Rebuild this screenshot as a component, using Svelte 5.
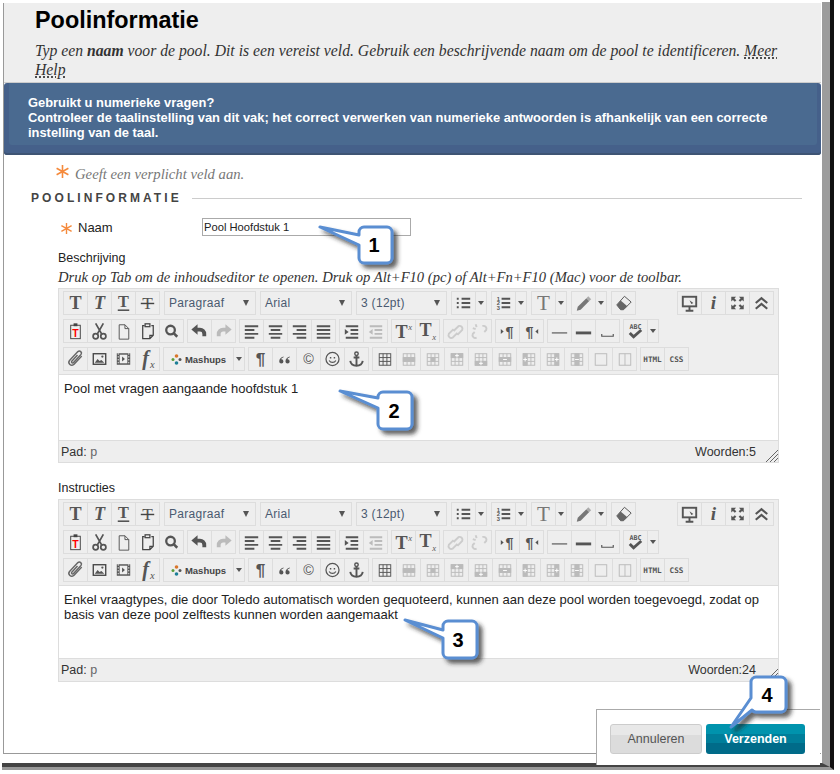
<script>
  const txt = (s, x, y, size, attrs = 'font-family="Liberation Serif" font-weight="bold"', c = '#555') =>
    `<text x="${x}" y="${y}" font-size="${size}" text-anchor="middle" fill="${c}" stroke="none" ${attrs}>${s}</text>`;
  const grid = (c, extra = '') =>
    `<g stroke="${c}"><rect x="6.5" y="6.5" width="12" height="12"/><path d="M10.5 6.5v12M14.5 6.5v12M6.5 10.5h12M6.5 14.5h12"/></g>${extra}`;
  const lines = (d, c = '#555') => `<path d="${d}" stroke="${c}" stroke-width="2"/>`;
  const sans = 'font-family="Liberation Sans" font-weight="bold"';
  const mono = 'font-family="DejaVu Sans Mono" font-weight="bold"';
  const ital = 'font-family="Liberation Serif" font-weight="bold" font-style="italic"';
  const G = '#bbb';

  const icons = {
    tb: txt('T', 12, 18, 19),
    ti: txt('T', 12, 18, 19, ital),
    tu: txt('T', 12, 16, 17) + '<path d="M6 19.5h12" stroke="#444" stroke-width="1.5"/>',
    ts: txt('T', 12, 18, 18, 'font-family="Liberation Serif"') + '<path d="M5 12.5h14" stroke="#444" stroke-width="1.5"/>',
    list: lines('M10 7.5h9M10 12h9M10 16.5h9M5 7.5h2M5 12h2M5 16.5h2'),
    num: lines('M10 7.5h9M10 12h9M10 16.5h9') + txt('1', 6.5, 9.5, 6, sans) + txt('2', 6.5, 14.5, 6, sans) + txt('3', 6.5, 19.5, 6, sans),
    tc: txt('T', 12, 19, 22, 'font-family="Liberation Serif"', '#777'),
    mark: '<path d="M5 20l1-4 9-9 3 3-9 9z" fill="#777" stroke="none"/><path d="M15 7l2-2 3 3-2 2z" fill="#aaa" stroke="none"/>',
    erase: '<path d="M5 14l8-9 7 6-8 8H9z" stroke="#555"/><path d="M5 14l4-4.5 7 6L12 19H9z" fill="#666" stroke="none"/>',
    mon: '<rect x="5" y="5.5" width="14" height="10" stroke="#555" stroke-width="2"/><path d="M12 16v3M8 20h8" stroke="#555" stroke-width="2"/><path d="M12 9l4 3-2 1z" fill="#555" stroke="none"/>',
    info: txt('i', 12, 18, 20, ital),
    full: '<path d="M5.500 5.500h5l-1.700 1.700 2 2-1.600 1.600-2-2-1.700 1.700zM18.500 5.500h-5l1.700 1.700-2 2 1.600 1.600 2-2 1.700 1.700zM5.500 18.500h5l-1.700-1.700 2-2-1.600-1.600-2 2-1.700-1.700zM18.500 18.500h-5l1.700-1.700-2-2 1.600-1.600 2 2 1.700-1.700z" fill="#555" stroke="none"/>',
    up: '<path d="M6 12l6-5 6 5M6 18l6-5 6 5" stroke="#555" stroke-width="2.2"/>',
    pasteT: '<rect x="7" y="6" width="10" height="14" stroke="#444"/><rect x="10" y="4" width="4" height="3" fill="#444" stroke="none"/>' + txt('T', 12, 18, 11, sans, '#f00'),
    cut: '<circle cx="8" cy="17.5" r="2.7" stroke="#555" stroke-width="1.8"/><circle cx="16" cy="17.5" r="2.7" stroke="#555" stroke-width="1.8"/><path d="M9.5 15.5L16 4M14.5 15.5L8 4" stroke="#555" stroke-width="1.8"/>',
    doc: '<path d="M7.500 5.500h6l4 4v11h-10zM13.500 5.500v4h4" stroke="#555"/>',
    paste: '<path d="M9 6.500H7v13.500h7.500l3.500-3.500V6.500h-2M14.500 20v-3.500H18" stroke="#444" stroke-width="1.300"/><rect x="9.500" y="4.500" width="5" height="3" stroke="#444" stroke-width="1.300"/>',
    find: '<circle cx="11" cy="11" r="4.500" stroke="#555" stroke-width="2.400"/><path d="M14 14l4 4" stroke="#555" stroke-width="2.600"/>',
    undo: '<path d="M9 10.500h3.500a4.500 4.500 0 0 1 4.500 4.500v2.500" stroke="#555" stroke-width="4"/><path d="M3.500 10.500L10 5v11z" fill="#555" stroke="none"/>',
    redo: '<path d="M15 10.500h-3.500a4.500 4.500 0 0 0-4.500 4.500v2.500" stroke="#bbb" stroke-width="4"/><path d="M20.500 10.500L14 5v11z" fill="#bbb" stroke="none"/>',
    al: lines('M5 7h14M5 11h10M5 15h14M5 19h10'),
    ac: lines('M5 7h14M7 11h10M5 15h14M7 19h10'),
    ar: lines('M5 7h14M9 11h10M5 15h14M9 19h10'),
    aj: lines('M5 7h14M5 11h14M5 15h14M5 19h14'),
    ind: lines('M6 7h13M11 11h8M11 15h8M6 19h13') + '<path d="M5 10l4 3-4 3z" fill="#555" stroke="none"/>',
    out: lines('M6 7h13M11 11h8M11 15h8M6 19h13', G) + '<path d="M9 10l-4 3 4 3z" fill="#bbb" stroke="none"/>',
    sup: txt('T', 10, 19, 19) + txt('x', 19, 11, 9, 'font-family="Liberation Serif" font-style="italic"'),
    sub: txt('T', 10, 17, 19) + txt('x', 19, 21, 9, 'font-family="Liberation Serif" font-style="italic"'),
    link: '<path d="M10 12l5-5a3 3 0 0 1 4 4l-5 5M14 14l-5 5a3 3 0 0 1-4-4l5-5" stroke="#ccc" stroke-width="2"/>',
    unlink: '<path d="M15 7a3 3 0 0 1 4 4l-2 2M9 19a3 3 0 0 1-4-4l2-2M8 5l1 3M5 9l3 1" stroke="#ccc" stroke-width="2"/>',
    ltr: txt('¶', 14, 18, 15, sans) + '<path d="M5 10l3 2.5-3 2.5z" fill="#555" stroke="none"/>',
    rtl: txt('¶', 10, 18, 15, sans) + '<path d="M19 10l-3 2.5 3 2.5z" fill="#555" stroke="none"/>',
    hr: '<path d="M4 14h16" stroke="#555" stroke-width="1.2"/>',
    hr2: '<path d="M4 14h16" stroke="#555" stroke-width="3"/>',
    nbsp: '<path d="M6 15v2.5h12V15" stroke="#555" stroke-width="1.2"/>',
    spell: txt('ABC', 12, 10, 7, mono) + '<path d="M6 14l4 4 8-7" stroke="#555" stroke-width="3"/>',
    clip: '<path d="M18.500 9l-8 8.500a3 3 0 0 1-4.500-4.200l8.500-9a2.200 2.200 0 0 1 3.200 3l-8 8.500a1 1 0 0 1-1.600-1.400l6-6.500" stroke="#666" stroke-width="1.500"/>',
    img: '<rect x="5.500" y="6.500" width="13" height="11" stroke="#444" stroke-width="1.400"/><path d="M7 16l3-4 2 2 2-1 3 3z" fill="#555" stroke="none"/><circle cx="15" cy="9.500" r="1.200" fill="#555" stroke="none"/>',
    vid: '<rect x="5" y="6" width="14" height="12" fill="#555" stroke="none"/><rect x="8" y="7.500" width="8" height="9" fill="#eee" stroke="none"/><path d="M10.500 9.500l3 2.500-3 2.500z" fill="#555" stroke="none"/><path d="M6.500 6v12M17.500 6v12" stroke="#eee" stroke-width="1" stroke-dasharray="1.500 1.500"/>',
    fx: txt('f', 10, 18, 21, ital) + txt('x', 17, 21, 11, 'font-family="Liberation Serif" font-style="italic"'),
    para: txt('¶', 12, 18, 18, sans),
    quote: '<path d="M11 9.500c-3 1-4.500 2.700-4.500 5a2.200 2.200 0 1 0 2.200-2.200c.1-.9.900-1.500 2.300-2zM17.500 9.500c-3 1-4.500 2.700-4.500 5a2.200 2.200 0 1 0 2.200-2.200c.1-.9.900-1.500 2.300-2z" fill="#555" stroke="none"/>',
    copy: txt('©', 12, 17, 15, 'font-family="Liberation Sans"'),
    smile: '<circle cx="12" cy="12" r="6.800" stroke="#555" stroke-width="1.300"/><path d="M10 10v1.500M14 10v1.500" stroke="#555" stroke-width="1.500"/><path d="M8.500 13.500a4 4 0 0 0 7 0" stroke="#555" stroke-width="1.200"/>',
    anchor: '<circle cx="12" cy="6.500" r="1.800" stroke="#555" stroke-width="1.500"/><path d="M12 8v11M9 10.500h6" stroke="#555" stroke-width="2"/><path d="M5.500 14c.5 3.500 3.500 5 6.500 5s6-1.500 6.500-5" stroke="#555" stroke-width="2"/>',
    t0: grid('#555'),
    t1: grid(G, '<rect x="6" y="10" width="13" height="5" fill="#bbb" stroke="none"/>'),
    t2: grid(G, '<rect x="10" y="10" width="5" height="5" fill="#bbb" stroke="none"/>'),
    t3: grid(G, '<rect x="6" y="6" width="13" height="5" fill="#bbb" stroke="none"/><path d="M12.500 6.500v4M10.500 8.500h4" stroke="#fff"/>'),
    t4: grid(G, '<rect x="6" y="14" width="13" height="5" fill="#bbb" stroke="none"/><path d="M12.500 14.500v4M10.500 16.500h4" stroke="#fff"/>'),
    t5: grid(G, '<rect x="6" y="10" width="13" height="5" fill="#bbb" stroke="none"/><path d="M10.500 12.500h4" stroke="#fff"/>'),
    t6: grid(G, '<rect x="6" y="6" width="5" height="13" fill="#bbb" stroke="none"/><path d="M8.500 10.500v4M6.500 12.500h4" stroke="#fff"/>'),
    t7: grid(G, '<rect x="14" y="6" width="5" height="13" fill="#bbb" stroke="none"/><path d="M16.500 10.500v4M14.500 12.500h4" stroke="#fff"/>'),
    t8: grid(G, '<rect x="10" y="6" width="5" height="13" fill="#bbb" stroke="none"/><path d="M10.500 12.500h4" stroke="#fff"/>'),
    t9: `<rect x="6.500" y="6.500" width="12" height="12" stroke="${G}"/>`,
    t10: `<rect x="6.500" y="6.500" width="12" height="12" stroke="${G}"/><path d="M12.500 6.500v12" stroke="${G}"/>`,
    html: txt('HTML', 12, 15, 8, mono),
    css: txt('CSS', 12, 15, 8, mono)
  };

  const rows = [
    [['tb', 'ti', 'tu', 'ts'], [{ sel: 'Paragraaf', w: 92 }], [{ sel: 'Arial', w: 92 }], [{ sel: '3 (12pt)', w: 91 }],
      ['list', 'c'], ['num', 'c'], ['tc', 'c'], ['mark', 'c'], ['erase'], ['mon', 'info', 'full', 'up']],
    [['pasteT', 'cut', 'doc', 'paste', 'find'], ['undo', 'redo'], ['al', 'ac', 'ar', 'aj'], ['ind', 'out'], ['sup', 'sub'],
      ['link', 'unlink'], ['ltr', 'rtl'], ['hr', 'hr2', 'nbsp'], ['spell', 'c']],
    [['clip', 'img', 'vid', 'fx'], ['mash', 'c'], ['para', 'quote', 'copy', 'smile', 'anchor'],
      ['t0', 't1', 't2', 't3', 't4', 't5', 't6', 't7', 't8', 't9', 't10'], ['html', 'css']]
  ];

  const callouts = [
    { n: 1, x: 374, y: 252, d: 'M364 227H387a5 5 0 0 1 5 5V258a5 5 0 0 1-5 5H364a5 5 0 0 1-5-5V245L320 227L359 235V232a5 5 0 0 1 5-5Z' },
    { n: 2, x: 394, y: 418, d: 'M383 392H407a5 5 0 0 1 5 5V424a5 5 0 0 1-5 5H383a5 5 0 0 1-5-5V408L340 391L378 398V397a5 5 0 0 1 5-5Z' },
    { n: 3, x: 458, y: 647, d: 'M448 621H472a5 5 0 0 1 5 5V653a5 5 0 0 1-5 5H448a5 5 0 0 1-5-5V638L405 620L443 630V626a5 5 0 0 1 5-5Z' },
    { n: 4, x: 767, y: 702, d: 'M756 677H781a5 5 0 0 1 5 5V707a5 5 0 0 1-5 5H756a5 5 0 0 1-4-2L731 727L751 698V682a5 5 0 0 1 5-5Z' }
  ];
</script>

{#snippet star(cls)}
  <svg class={cls} viewBox="0 0 14 14" fill="none" stroke="#f58a3c" stroke-width="1.500">
    <path d="M7 1v12M1.500 4l11 6M1.500 10l11-6" />
  </svg>
{/snippet}

{#snippet editor(text, words, cls)}
  <div class="editor {cls}">
    <div class="toolbar">
      {#each rows as row, r}
        <div class="row" class:first={r === 0}>
          {#each row as group}
            <div class="group" class:push={group[0] === 'mon'}>
              {#each group as item}
                {#if item === 'c'}
                  <span class="caret"><i></i></span>
                {:else if item === 'mash'}
                  <span class="btn mash">
                    <svg width="11" height="11" viewBox="0 0 11 11">
                      <circle cx="5.500" cy="2" r="1.800" fill="#d9772b" />
                      <circle cx="2" cy="5.500" r="1.500" fill="#5c9e3c" />
                      <circle cx="9" cy="5.500" r="1.500" fill="#555" />
                      <circle cx="5.500" cy="9" r="1.800" fill="#1d7f96" />
                    </svg>
                    Mashups
                  </span>
                {:else if item.sel}
                  <span class="btn sel" class:w91={item.w === 91}>{item.sel}<i></i></span>
                {:else}
                  <span class="btn">
                    <svg width="24" height="24" viewBox="0 0 24 24" fill="none">{@html icons[item]}</svg>
                  </span>
                {/if}
              {/each}
            </div>
          {/each}
        </div>
      {/each}
    </div>
    <div class="content">{text}</div>
    <div class="status">
      <span>Pad: <em>p</em></span>
      <span>Woorden:{words}</span>
      <svg class="grip" width="13" height="13" viewBox="0 0 13 13" stroke="#666" stroke-width="1">
        <path d="M1 13L13 1M5 13l8-8M9 13l4-4" />
      </svg>
    </div>
  </div>
{/snippet}

<div class="shot">
  <div class="torn">
    <div class="paper">
      <div class="frame">
        <header class="head">
          <h1>Poolinformatie</h1>
          <p>Typ een <b>naam</b> voor de pool. Dit is een vereist veld. Gebruik een beschrijvende naam om de pool te identificeren. <u>Meer Help</u></p>
        </header>

        <div class="banner">
          <div class="banner-in">
            Gebruikt u numerieke vragen?<br />
            Controleer de taalinstelling van dit vak; het correct verwerken van numerieke antwoorden is afhankelijk van een correcte instelling van de taal.
          </div>
        </div>

        <div class="req">{@render star('star-big')}<span>Geeft een verplicht veld aan.</span></div>

        <div class="sec"><h2>POOLINFORMATIE</h2><span></span></div>

        <div class="field">
          {@render star('star-small')}
          <label for="pool-naam">Naam</label>
          <input id="pool-naam" value="Pool Hoofdstuk 1" />
        </div>

        <div class="block">
          <div class="lab">Beschrijving</div>
          <div class="hint">Druk op Tab om de inhoudseditor te openen. Druk op Alt+F10 (pc) of Alt+Fn+F10 (Mac) voor de toolbar.</div>
          {@render editor('Pool met vragen aangaande hoofdstuk 1', 5, 'one')}
          <div class="lab second">Instructies</div>
          {@render editor('Enkel vraagtypes, die door Toledo automatisch worden gequoteerd, kunnen aan deze pool worden toegevoegd, zodat op basis van deze pool zelftests kunnen worden aangemaakt', 24, 'two')}
        </div>
      </div>
    </div>
  </div>

  <div class="submit">
    <button class="cancel">Annuleren</button>
    <button class="send">Verzenden</button>
  </div>

  <svg class="notes" width="840" height="774" viewBox="0 0 840 774">
    <defs>
      <filter id="sh" x="-30%" y="-30%" width="170%" height="170%">
        <feDropShadow dx="4" dy="4" stdDeviation="2" flood-color="#222" flood-opacity=".7" />
      </filter>
    </defs>
    {#each callouts as c}
      <path d={c.d} fill="#fff" stroke="#5a8ed2" stroke-width="3" stroke-linejoin="round" filter="url(#sh)" />
      <text x={c.x} y={c.y} class="num">{c.n}</text>
    {/each}
  </svg>
</div>

<style>
  :global(body) { margin: 0; background: #fff; }
  .shot { position: relative; width: 840px; height: 774px; overflow: hidden; background: #fff; font-family: "Liberation Sans", Arial, sans-serif; color: #222; }
  .torn { box-sizing: border-box; margin-left: 2px; width: 832px; height: 770px; padding-top: 2px; border-right: 4px solid #111; border-bottom: 3px solid #999; }
  .paper { box-sizing: border-box; height: 100%; padding-top: 1px; padding-left: 1px; border-right: 8px solid #9c9c9c; border-bottom: 4px solid #444; }
  .frame { box-sizing: border-box; width: 818px; height: 751px; border-left: 1px solid #999; border-bottom: 1px solid #999; }

  .head { box-sizing: border-box; height: 80px; padding: 4px 40px 0 31px; background: #eee; border-bottom: 1px solid #ccc; }
  h1 { margin: 0; font-size: 23.400px; line-height: 26px; color: #000; }
  .head p { margin: 8px 0 0; font: italic 15.700px/19px "Liberation Serif", serif; color: #333; }
  .head b { font-weight: bold; }
  .head u { text-decoration: underline dotted #222; text-underline-offset: 2px; }

  .banner { box-sizing: border-box; height: 72px; padding: 0 4px 10px 5px; background: #45608a; border-radius: 3px; box-shadow: inset 0 -2px #3e5474; }
  .banner-in { height: 100%; box-sizing: border-box; padding: 12px 40px 0 19px; background: #4a6a90; border-radius: 0 0 3px 3px; color: #fff; font-size: 12.900px; font-weight: bold; line-height: 15px; }

  .req { display: flex; align-items: center; gap: 5px; height: 20px; margin-top: 9px; padding-left: 51px; font: italic 14.700px "Liberation Serif", serif; color: #777; }
  .star-big { width: 15px; height: 15px; margin-top: -6px; }
  .sec { display: flex; align-items: center; gap: 10px; height: 16px; margin-top: 6px; padding: 0 19px 0 27px; }
  h2 { margin: 0; font-size: 12px; letter-spacing: 3.070px; color: #444; }
  .sec span { flex: 1; height: 1px; background: #ccc; }

  .field { display: flex; align-items: center; height: 18px; margin-top: 12px; padding-left: 56px; font-size: 13px; }
  .star-small { width: 13px; height: 13px; margin-top: 3px; margin-right: 5px; }
  .field label { width: 124px; }
  input { box-sizing: border-box; width: 209px; height: 18px; padding: 0 1px; border: 1px solid #aaa; font: 11.200px "Liberation Sans", sans-serif; color: #222; background: #fff; }

  .block { padding: 14px 42px 0 54px; }
  .lab { height: 16px; font-size: 12.500px; line-height: 16px; }
  .lab.second { margin-top: 17px; }
  .hint { height: 20px; margin-top: 1px; font: italic 14.600px/20px "Liberation Serif", serif; color: #333; white-space: nowrap; }

  .editor { margin-top: 1px; background: #fff; }
  .editor.two { margin-top: 3px; }
  .toolbar { box-sizing: border-box; height: 87px; padding: 2px 4px 0; display: flex; flex-direction: column; gap: 4px; background: #eee; border: 1px solid #ddd; }
  .row { display: flex; gap: 3px; height: 24px; }
  .row.first { gap: 4px; }
  .group { display: flex; }
  .group.push { margin-left: auto; }
  .btn, .caret { box-sizing: border-box; display: flex; align-items: center; height: 24px; border: 1px solid #ddd; margin-left: -1px; background: #eee; flex: none; }
  .group > :first-child { margin-left: 0; }
  .btn { width: 25px; justify-content: center; overflow: hidden; }
  .caret { width: 12px; justify-content: center; }
  .caret i { width: 0; height: 0; border: 3px solid transparent; border-top: 4px solid #555; border-bottom: 0; }
  .sel { width: 92px; justify-content: flex-start; padding-left: 4px; font-size: 12px; letter-spacing: .3px; color: #4a5a70; position: relative; }
  .sel.w91 { width: 91px; }
  .sel i { position: absolute; right: 6px; top: 8px; width: 0; height: 0; border-style: solid; border-color: #555 transparent transparent; border-width: 6px 3.500px 0; }
  .mash { width: 71px; gap: 3px; font-size: 9.500px; font-weight: bold; color: #444; }

  .content { box-sizing: border-box; padding: 6px 5px; font-size: 13px; line-height: 15px; color: #222; border-left: 1px solid #ddd; border-right: 1px solid #ddd; }
  .one .content { height: 65px; }
  .two .content { height: 72px; }
  .status { box-sizing: border-box; position: relative; display: flex; justify-content: space-between; align-items: center; padding: 0 22px 0 2px; background: #eee; border: 1px solid #ddd; font-size: 12.500px; color: #333; }
  .one .status { height: 23px; }
  .two .status { height: 24px; }
  .status em { font-style: normal; color: #666; }
  .grip { position: absolute; right: 0; bottom: 0; }

  .submit { position: absolute; left: 596px; top: 709px; width: 224px; height: 56px; box-sizing: border-box; display: flex; gap: 4px; padding: 14px 0 0 13px; background: #fff; border-top: 1px solid #aaa; border-left: 1px solid #aaa; }
  button { box-sizing: border-box; height: 30px; font: 12.500px "Liberation Sans", sans-serif; border-radius: 3px; }
  .cancel { width: 92px; color: #555; border: 1px solid #ccc; background: linear-gradient(#e8e8e8 35%, #dcdcdc 35%); }
  .send { width: 99px; color: #fff; font-weight: bold; border: 0; background: linear-gradient(#0093ad 35%, #007e9a 35%, #007e9a 65%, #006b89 65%); }

  .notes { position: absolute; left: 0; top: 0; pointer-events: none; }
  .num { font: bold 20px "Liberation Sans", sans-serif; text-anchor: middle; fill: #000; }
</style>
